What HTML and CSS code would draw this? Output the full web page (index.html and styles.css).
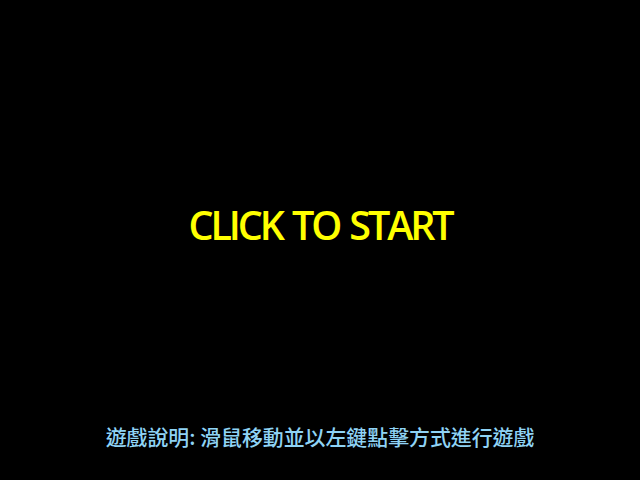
FILE: index.html
```html
<!DOCTYPE html>
<html>
<head>
<meta charset="utf-8">
<link rel="stylesheet" href="styles.css">
</head>
<body>
<div class="screen">
  <div class="title">CLICK TO START</div>
  <div class="help">遊戲說明: 滑鼠移動並以左鍵點擊方式進行遊戲</div>
</div>
</body>
</html>
```
FILE: styles.css
```css
html, body {
  margin: 0;
  padding: 0;
  background: #000;
}
.screen {
  width: 640px;
  height: 480px;
  background: #000;
  display: flex;
  flex-direction: column;
  align-items: center;
}
.title {
  margin-top: 197px;
  font-family: "Open Sans", sans-serif;
  font-weight: 600;
  font-size: 39.5px;
  line-height: 56px;
  color: #ffff00;
  letter-spacing: -3.1px;
  word-spacing: 3px;
}
.help {
  margin-top: 169px;
  font-family: "Noto Sans CJK TC", "Noto Sans", sans-serif;
  font-weight: 500;
  font-size: 20.9px;
  line-height: 28px;
  color: #8fd3f5;
}
```
